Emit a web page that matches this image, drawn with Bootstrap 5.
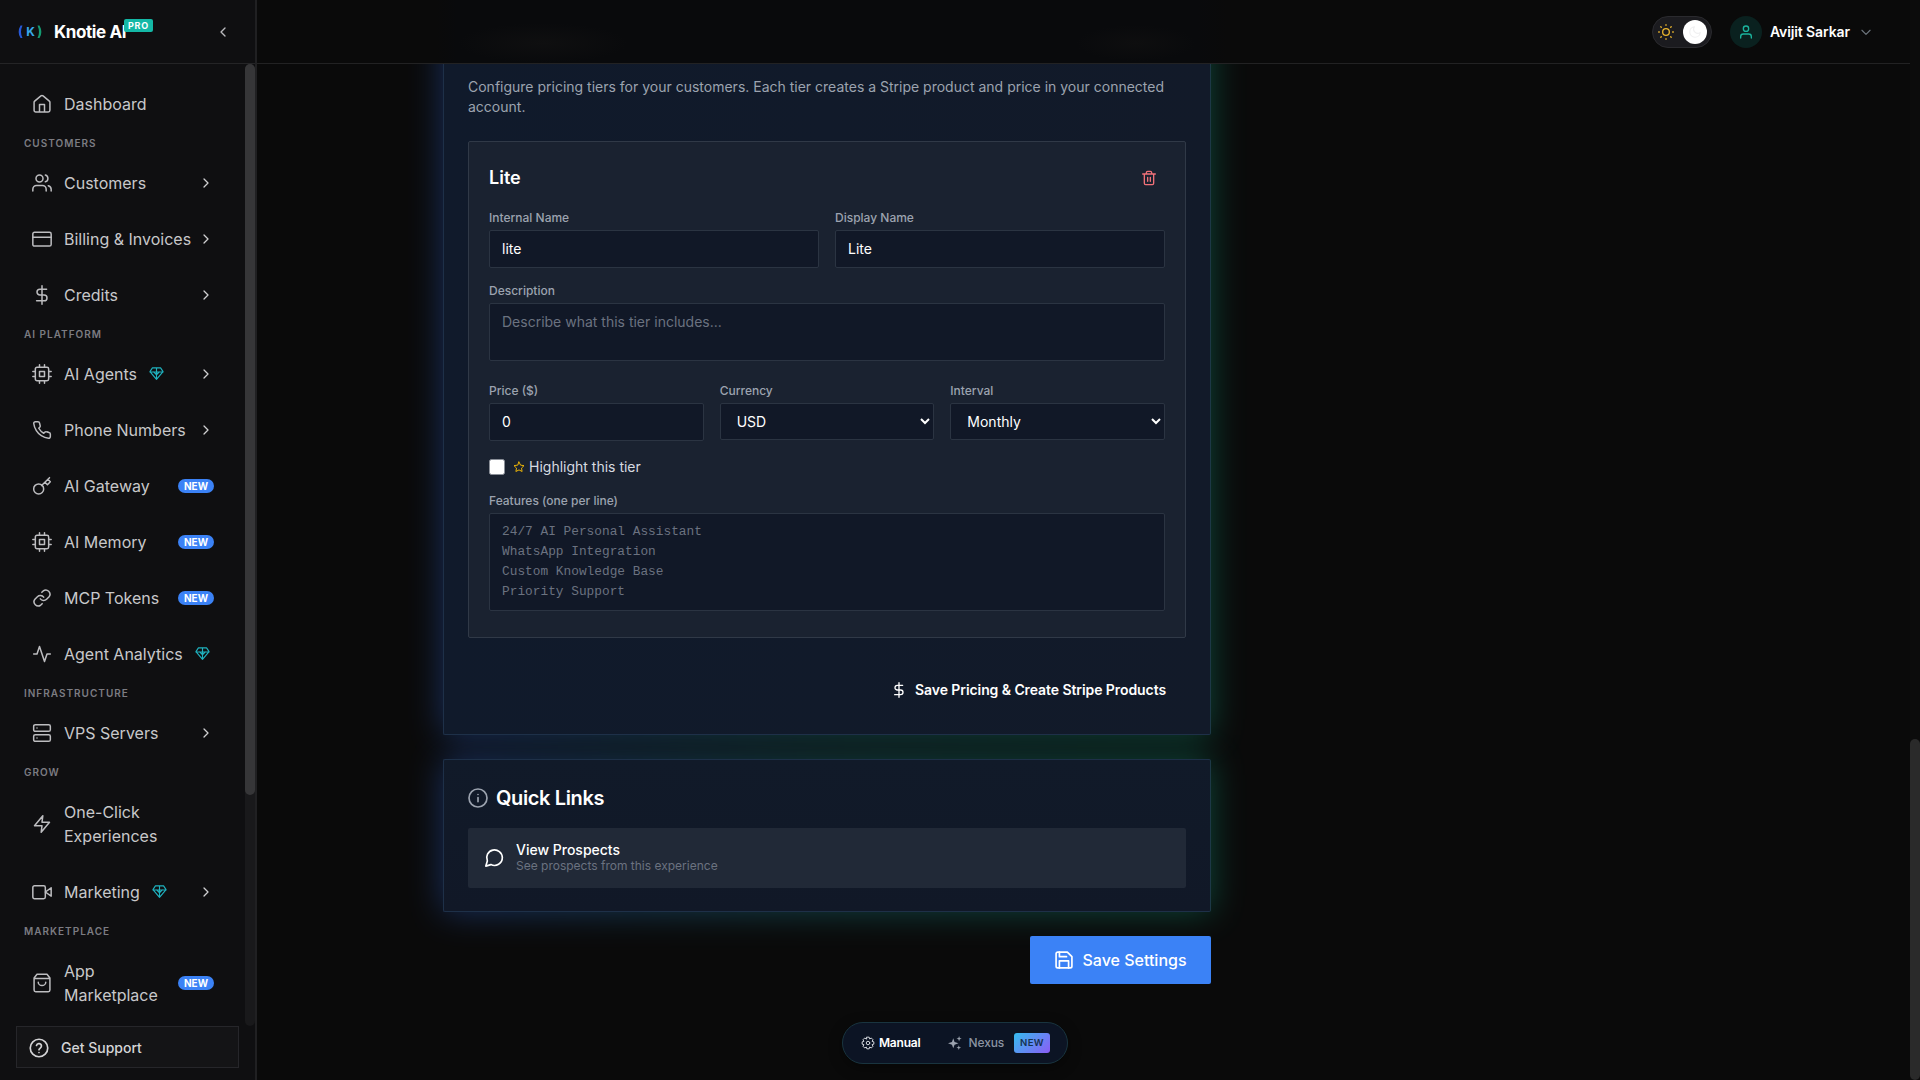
<!DOCTYPE html>
<html lang="en" data-bs-theme="dark">
<head>
<meta charset="utf-8">
<meta name="viewport" content="width=device-width, initial-scale=1">
<title>Knotie AI</title>
<link href="https://cdn.jsdelivr.net/npm/bootstrap@5.3.0/dist/css/bootstrap.min.css" rel="stylesheet">
<style>
body{font-family:Inter,"Liberation Sans",sans-serif;background:#0a0a0a;color:#fff;font-size:14px;line-height:20px;height:100vh;overflow:hidden}
.ico{width:20px;height:20px;flex:none;fill:none;stroke:currentColor;stroke-width:2;stroke-linecap:round;stroke-linejoin:round}
.ico-16{width:16px;height:16px}.ico-14{width:14px;height:14px}.ico-12{width:12px;height:12px}
/* sidebar */
.side{width:257px;background:#0f0f11;border-right:2px solid #202022}
.side-head{height:64px;border-bottom:1px solid #242426;padding:0 24px 0 18px}
.brand-name{font-size:17px;font-weight:700;letter-spacing:-.4px;margin-left:12px;position:relative}
.pro-tag{position:absolute;left:70px;top:-3px;background:#14b8a6;color:#fff;font-size:9px;font-weight:700;line-height:13px;letter-spacing:.7px;padding:0 4px;border-radius:2px}
.side-scroll{min-width:0;padding:11.7px 31px 0 32px}
.side-item{padding:16px 0;font-size:16px;line-height:24px;color:#c8c8ca;gap:12px}
.side-item .ico{color:#bdbdc0;stroke-width:1.8}
.side-item .ico-16{color:#d0d0d2;stroke-width:1.9}
.side-item .gem{width:15px;height:15px;color:#1fb2bf;stroke-width:1.8}
.side-item.snug{gap:12px 6px}
.side-item.snug .ico:first-child{margin-right:6px}
.side-label{font-size:10px;font-weight:600;letter-spacing:1px;line-height:20px;height:23px;padding-top:1.5px;color:#7c7c82;margin-left:-8px}
.new-pill{background:#3b82f6;color:#fff;font-size:10px;font-weight:700;line-height:14px;border-radius:7px;width:36px;text-align:center}
.side-track{width:10px;background:#19191b;border-radius:5px}
.side-thumb{height:731px;background:#363638;border-radius:5px}
.support{height:42px;margin:0 16px 12px;border:1px solid #26262a;background:#141416;color:#d4d4d6;font-weight:500;padding:1px 12px 0;gap:12px}
/* top bar */
.topbar{height:64px;border-bottom:1px solid #222223;padding-right:37px;z-index:3;
 background:radial-gradient(ellipse 85px 20px at 286px 43px,#0f0f10,transparent),radial-gradient(ellipse 60px 18px at 879px 43px,#0e0e0f,transparent),linear-gradient(90deg,#0a0a0a 180px,#090a0c 200px,#090a0c 940px,#0a0a0a 970px)}
.theme-sw{width:60px;height:32px;border-radius:16px;background:#1b1b1f;border:1px solid #2a2a2e;padding:0 4px 0 5px}
.knob{width:24px;height:24px;background:#fff;color:#f0f0f1}
.avatar-dot{width:32px;height:32px;background:#0a211f;color:#1bb39d;margin:0 8px 0 18px}
.user-name{font-weight:600;letter-spacing:-.1px;margin-right:9px}
/* content */
.stage{position:relative;z-index:0;overflow:hidden;padding-left:186px}
.col-main{width:768px}
.glow{position:relative}
.glow::before{content:"";position:absolute;inset:0;z-index:-1;background:linear-gradient(90deg,#2f62d6,#1f8f98 50%,#109c7a);filter:blur(17px);opacity:.42}
.panel{background:linear-gradient(180deg,#111a29,#111827);border:1px solid #1e3048;border-right-color:#1d3846;border-radius:2px;padding:24px}
.panel-main{margin-top:-40px;padding-top:52px;height:710.5px;background:linear-gradient(90deg,#101a2b,#121a29)}
.tier{background:#1a2230;border:1px solid #303947;border-radius:2px;padding:20px;height:497px}
.lbl{display:block;font-size:12px;font-weight:500;line-height:16px;color:#9ca3af;margin-bottom:4px}
.tier .form-control,.tier .form-select{background:#111827;border:1px solid #2b3442;border-radius:2px;color:#fff;font-size:14px;line-height:20px;padding:8px 12px;resize:none;overflow:hidden}
.tier .form-select{appearance:auto;height:37px;padding:0 0 0 12px}
.tier .form-control::placeholder{color:#6b7280;opacity:1}
.tier .mono{font-family:"Liberation Mono",monospace;font-size:12.82px}
.three{display:grid;grid-template-columns:repeat(3,1fr);gap:16px}
.hl-box{width:16px;height:16px;background:#fff;border:1px solid #8a8f98;border-radius:2.5px}
.quick{background:#212937;border-radius:2px;height:60px;padding:0 16px;gap:12px}
.save-btn{background:#3b82f6;color:#fff;height:48px;width:181px;border-radius:2px;font-size:16px;font-weight:500;gap:8px}
.mode-pill{position:absolute;left:585px;top:958px;width:226px;height:42px;border-radius:21px;background:#0c1424;border:1px solid #19343f;font-size:12px;letter-spacing:-.1px;box-shadow:0 4px 14px #0006;padding:0 17px 0 18px}
.new-grad{background:linear-gradient(135deg,#35bdf0,#8b5cf6);color:#173252;font-size:9.6px;font-weight:600;letter-spacing:.4px;width:36px;height:20px;line-height:19px;border-radius:3px;text-align:center}
.page-track{width:10px;background:#0c0c0c;padding-top:739px}
.page-thumb{height:341px;background:#2a2a2a;border-radius:5px}
</style>
<script src="https://cdn.jsdelivr.net/npm/bootstrap@5.3.0/dist/js/bootstrap.bundle.min.js"></script>
</head>
<body class="d-flex">
<svg class="d-none" xmlns="http://www.w3.org/2000/svg">
<symbol id="home" viewBox="0 0 24 24"><path d="M2.500 10a2 2 0 0 1 .7-1.500l7.500-6.200a2 2 0 0 1 2.600 0l7.500 6.200a2 2 0 0 1 .7 1.500v9.500a2 2 0 0 1-2 2h-15a2 2 0 0 1-2-2zM9 21.500v-9h6v9"/></symbol>
<symbol id="users" viewBox="0 0 24 24"><circle cx="9" cy="6.500" r="4.200"/><path d="M1 21.500v-2a4.500 4.500 0 0 1 4.500-4.500h7a4.500 4.500 0 0 1 4.500 4.500v2M16 2.500a4.200 4.200 0 0 1 0 8.100M19.500 15.200a4.500 4.500 0 0 1 3.500 4.300v2"/></symbol>
<symbol id="credit" viewBox="0 0 24 24"><rect x="1" y="4" width="22" height="16.500" rx="2"/><path d="M1 9.800h22"/></symbol>
<symbol id="dollar" viewBox="0 0 24 24"><path d="M12 1v22M17.500 5H9.500a3.500 3.500 0 0 0 0 7h5a3.500 3.500 0 0 1 0 7H5.500"/></symbol>
<symbol id="cpu" viewBox="0 0 24 24"><rect x="4" y="4" width="16" height="16" rx="2"/><path d="M9 9h6v6H9zM9 1v3M15 1v3M9 20v3M15 20v3M20 9h3M20 15h3M1 9h3M1 15h3"/></symbol>
<symbol id="phone" viewBox="0 0 24 24"><path d="M22 16.900v3a2 2 0 0 1-2.200 2 19.800 19.800 0 0 1-8.600-3.100 19.500 19.500 0 0 1-6-6A19.800 19.800 0 0 1 2.100 4.200 2 2 0 0 1 4.100 2h3a2 2 0 0 1 2 1.700c.1 1 .4 1.900.7 2.800a2 2 0 0 1-.5 2.100L8.100 9.900a16 16 0 0 0 6 6l1.300-1.300a2 2 0 0 1 2.100-.4c.9.300 1.800.6 2.800.7a2 2 0 0 1 1.700 2z"/></symbol>
<symbol id="key" viewBox="0 0 24 24"><path d="M21 2l-9.500 9.500M19 4l3 3-3.500 3.500-3-3"/><circle cx="8" cy="15.500" r="6"/></symbol>
<symbol id="link" viewBox="0 0 24 24"><path d="M10 13a5 5 0 0 0 7.500.5l3-3a5 5 0 0 0-7-7l-1.700 1.700M14 11a5 5 0 0 0-7.500-.5l-3 3a5 5 0 0 0 7 7l1.700-1.700"/></symbol>
<symbol id="pulse" viewBox="0 0 24 24"><path d="M22 12h-4l-3 9L9 3l-3 9H2"/></symbol>
<symbol id="server" viewBox="0 0 24 24"><rect x="2" y="2" width="20" height="8" rx="2"/><rect x="2" y="14" width="20" height="8" rx="2"/><path d="M6 6h.01M6 18h.01"/></symbol>
<symbol id="zap" viewBox="0 0 24 24"><path d="M13 2L3 14h9l-1 8 10-12h-9z"/></symbol>
<symbol id="video" viewBox="0 0 24 24"><path d="M23 7l-7 5 7 5z"/><rect x="1" y="4.500" width="15" height="15.500" rx="2"/></symbol>
<symbol id="bag" viewBox="0 0 24 24"><path d="M6 1.500L2.500 6v14.500a2 2 0 0 0 2 2h15a2 2 0 0 0 2-2V6L18 1.500zM2.500 6.500h19M16.500 11a4.500 4 0 0 1-9 0"/></symbol>
<symbol id="help" viewBox="0 0 24 24"><circle cx="12" cy="12" r="10.500"/><path d="M9 9a3 3 0 0 1 5.900 1c0 2-2.900 2.600-2.900 4M12 17.500h.01"/></symbol>
<symbol id="gem" viewBox="0 0 24 24"><path d="M5.500 3h13l4 6L12 21.500 1.500 9zM1.500 9.500h21M12 3v18M7.500 9.500l4.500 4.500 4.500-4.500"/></symbol>
<symbol id="right" viewBox="0 0 24 24"><path d="M9 18l6-6-6-6"/></symbol>
<symbol id="left" viewBox="0 0 24 24"><path d="M15 18l-6-6 6-6"/></symbol>
<symbol id="down" viewBox="0 0 24 24"><path d="M5 9l7 7 7-7"/></symbol>
<symbol id="sun" viewBox="0 0 24 24"><circle cx="12" cy="12" r="5"/><path d="M12 1v1M12 22v1M4.200 4.200l.7.700M19.100 19.100l.7.700M1 12h1M22 12h1M4.200 19.800l.7-.7M19.100 4.900l.7-.7"/></symbol>
<symbol id="moon" viewBox="0 0 24 24"><path d="M21 12.800A9 9 0 1 1 11.200 3 7 7 0 0 0 21 12.800z"/></symbol>
<symbol id="user" viewBox="0 0 24 24"><path d="M20 21v-2a4 4 0 0 0-4-4H8a4 4 0 0 0-4 4v2"/><circle cx="12" cy="7" r="4"/></symbol>
<symbol id="trash" viewBox="0 0 24 24"><path d="M2.500 6h19M19 6v14a2 2 0 0 1-2 2H7a2 2 0 0 1-2-2V6M8 6V4a2 2 0 0 1 2-2h4a2 2 0 0 1 2 2v2M10 11v6M14 11v6"/></symbol>
<symbol id="star" viewBox="0 0 24 24"><path d="M12 2l3.100 6.300 6.900 1-5 4.900 1.200 6.800-6.200-3.200L5.800 21 7 14.200 2 9.300l6.900-1z"/></symbol>
<symbol id="info" viewBox="0 0 24 24"><circle cx="12" cy="12" r="10.800"/><path d="M12 16.500v-5M12 7.800h.01"/></symbol>
<symbol id="chat" viewBox="0 0 24 24"><path d="M22 11.500a9.400 9.400 0 0 1-13.700 8.400L2.200 21.700l1.800-6.200A9.400 9.400 0 1 1 22 11.500z"/></symbol>
<symbol id="save" viewBox="0 0 24 24"><path d="M19.500 21.500h-15a2 2 0 0 1-2-2v-15a2 2 0 0 1 2-2H16l5.500 5.500v11.500a2 2 0 0 1-2 2z"/><path d="M17.500 21.500V13h-11v8.500M6.500 2.500V8H15"/></symbol>
<symbol id="gear" viewBox="0 0 24 24"><path d="M10 2h4l.8 3 2.900-1.500 2.800 2.800L19 9.200l3 .8v4l-3 .8 1.500 2.900-2.800 2.800-2.900-1.500-.8 3h-4l-.8-3-2.900 1.500-2.800-2.800L5 14.800 2 14v-4l3-.8-1.500-2.900 2.800-2.800L9.200 5z"/><circle cx="12" cy="12" r="3"/></symbol>
<symbol id="sparkles" viewBox="0 0 24 24"><path fill="currentColor" stroke="none" d="M9 4l2.200 6.300L18 12.500l-6.800 2.300L9 21l-2.200-6.200L0 12.500l6.800-2.200zM19 0l1.200 3.300L23.500 4.500l-3.300 1.200L19 9l-1.200-3.300L14.500 4.500l3.300-1.200zM18.500 16l1 3 3 1-3 1-1 3-1-3-3-1 3-1z"/></symbol>
</svg>

<aside class="side d-flex flex-column flex-shrink-0">
 <div class="side-head d-flex align-items-center">
  <svg width="24" height="14" viewBox="0 0 24 14"><path d="M4.500.5H2.500Q-1.200 7 2.500 13h2Q1.500 7 4.500.5z" fill="#2759d8"/><path d="M19.500.5h2Q25.200 7 21.500 13h-2Q22.500 7 19.500.5z" fill="#149b72"/><text x="8.200" y="10.500" font-size="12" font-weight="700" fill="#38a8e8" font-family="Inter">K</text></svg>
  <div class="brand-name">Knotie AI<span class="pro-tag">PRO</span></div>
  <svg class="ico ico-16 ms-auto" style="color:#bbbbbe"><use href="#left"/></svg>
 </div>
 <div class="d-flex flex-grow-1 overflow-hidden">
  <nav class="side-scroll flex-grow-1">
   <div class="side-item d-flex align-items-center"><svg class="ico"><use href="#home"/></svg>Dashboard</div>
   <div class="side-label">CUSTOMERS</div>
   <div class="side-item d-flex align-items-center"><svg class="ico"><use href="#users"/></svg>Customers<svg class="ico ico-16 ms-auto"><use href="#right"/></svg></div>
   <div class="side-item snug d-flex align-items-center text-nowrap"><svg class="ico"><use href="#credit"/></svg>Billing &amp; Invoices<svg class="ico ico-16 ms-auto"><use href="#right"/></svg></div>
   <div class="side-item d-flex align-items-center"><svg class="ico"><use href="#dollar"/></svg>Credits<svg class="ico ico-16 ms-auto"><use href="#right"/></svg></div>
   <div class="side-label">AI PLATFORM</div>
   <div class="side-item d-flex align-items-center"><svg class="ico"><use href="#cpu"/></svg>AI Agents<svg class="ico gem"><use href="#gem"/></svg><svg class="ico ico-16 ms-auto"><use href="#right"/></svg></div>
   <div class="side-item snug d-flex align-items-center text-nowrap"><svg class="ico"><use href="#phone"/></svg>Phone Numbers<svg class="ico ico-16 ms-auto"><use href="#right"/></svg></div>
   <div class="side-item d-flex align-items-center"><svg class="ico"><use href="#key"/></svg>AI Gateway<span class="new-pill ms-auto">NEW</span></div>
   <div class="side-item d-flex align-items-center"><svg class="ico"><use href="#cpu"/></svg>AI Memory<span class="new-pill ms-auto">NEW</span></div>
   <div class="side-item d-flex align-items-center"><svg class="ico"><use href="#link"/></svg>MCP Tokens<span class="new-pill ms-auto">NEW</span></div>
   <div class="side-item d-flex align-items-center text-nowrap"><svg class="ico"><use href="#pulse"/></svg>Agent Analytics<svg class="ico gem"><use href="#gem"/></svg></div>
   <div class="side-label">INFRASTRUCTURE</div>
   <div class="side-item d-flex align-items-center"><svg class="ico"><use href="#server"/></svg>VPS Servers<svg class="ico ico-16 ms-auto"><use href="#right"/></svg></div>
   <div class="side-label">GROW</div>
   <div class="side-item d-flex align-items-center"><svg class="ico"><use href="#zap"/></svg><span>One-Click<br>Experiences</span></div>
   <div class="side-item d-flex align-items-center"><svg class="ico"><use href="#video"/></svg>Marketing<svg class="ico gem"><use href="#gem"/></svg><svg class="ico ico-16 ms-auto"><use href="#right"/></svg></div>
   <div class="side-label">MARKETPLACE</div>
   <div class="side-item d-flex align-items-center"><svg class="ico"><use href="#bag"/></svg><span>App<br>Marketplace</span><span class="new-pill ms-auto">NEW</span></div>
  </nav>
  <div class="side-track flex-shrink-0"><div class="side-thumb"></div></div>
 </div>
 <div class="support d-flex align-items-center flex-shrink-0"><svg class="ico"><use href="#help"/></svg>Get Support</div>
</aside>

<div class="d-flex flex-column flex-grow-1">
 <header class="topbar d-flex align-items-center justify-content-end flex-shrink-0">
  <div class="theme-sw d-flex align-items-center justify-content-between"><svg class="ico ico-16" style="color:#eab52d"><use href="#sun"/></svg><span class="knob rounded-circle d-flex align-items-center justify-content-center"><svg class="ico ico-14"><use href="#moon"/></svg></span></div>
  <div class="avatar-dot rounded-circle d-flex align-items-center justify-content-center"><svg class="ico ico-16"><use href="#user"/></svg></div>
  <span class="user-name">Avijit Sarkar</span>
  <svg class="ico ico-14 text-secondary"><use href="#down"/></svg>
 </header>
 <main class="stage flex-grow-1">
  <div class="col-main">
   <section class="glow mb-4">
    <div class="panel panel-main">
     <p class="mb-4" style="color:#9ca3af">Configure pricing tiers for your customers. Each tier creates a Stripe product and price in your connected account.</p>
     <div class="tier">
      <div class="d-flex justify-content-between align-items-center pe-2" style="height:32px"><span class="fw-semibold" style="font-size:18px">Lite</span><svg class="ico ico-16" style="color:#f07178"><use href="#trash"/></svg></div>
      <div class="d-flex gap-3 mt-3">
       <div class="flex-fill"><label class="lbl">Internal Name</label><input class="form-control" value="lite"></div>
       <div class="flex-fill"><label class="lbl">Display Name</label><input class="form-control" value="Lite"></div>
      </div>
      <div style="margin-top:15px"><label class="lbl">Description</label><textarea class="form-control" style="height:58px" placeholder="Describe what this tier includes..."></textarea></div>
      <div class="three" style="margin-top:22px">
       <div><label class="lbl">Price ($)</label><input class="form-control" value="0"></div>
       <div><label class="lbl">Currency</label><select class="form-select"><option>USD</option></select></div>
       <div><label class="lbl">Interval</label><select class="form-select"><option>Monthly</option></select></div>
      </div>
      <div class="d-flex align-items-center" style="color:#d7dbe0;margin-top:15.500px"><span class="hl-box me-2"></span><svg class="ico ico-12 me-1" style="color:#eab308"><use href="#star"/></svg>Highlight this tier</div>
      <div class="mt-3"><label class="lbl">Features (one per line)</label><textarea class="form-control mono" style="height:98px" placeholder="24/7 AI Personal Assistant
WhatsApp Integration
Custom Knowledge Base
Priority Support"></textarea></div>
     </div>
     <div class="d-flex align-items-center justify-content-end" style="padding:42px 20px 0;gap:8px"><svg class="ico ico-16"><use href="#dollar"/></svg><span style="font-weight:600;letter-spacing:-.08px">Save Pricing &amp; Create Stripe Products</span></div>
    </div>
   </section>
   <section class="glow mb-4">
    <div class="panel" style="height:153.500px">
     <div class="d-flex align-items-center gap-2 fw-semibold" style="font-size:20px;line-height:28px;margin-bottom:16px;letter-spacing:-.38px"><svg class="ico" style="color:#9ca3af"><use href="#info"/></svg>Quick Links</div>
     <div class="quick d-flex align-items-center"><svg class="ico"><use href="#chat"/></svg><div><div style="font-weight:500;line-height:17px">View Prospects</div><div style="font-size:12px;line-height:16px;color:#6b7280">See prospects from this experience</div></div></div>
    </div>
   </section>
   <div class="d-flex justify-content-end"><button class="save-btn border-0 d-flex align-items-center justify-content-center"><svg class="ico"><use href="#save"/></svg>Save Settings</button></div>
  </div>
  <div class="mode-pill d-flex align-items-center">
   <svg class="ico ico-14" style="color:#d5d8de;stroke-width:1.7"><use href="#gear"/></svg><span class="fw-semibold" style="margin-left:4px;letter-spacing:-.2px">Manual</span>
   <svg class="ico ico-14" style="margin-left:28px;color:#9ca3af"><use href="#sparkles"/></svg><span style="margin-left:6px;color:#8b93a2;font-weight:500">Nexus</span>
   <span class="new-grad ms-auto">NEW</span>
  </div>
 </main>
</div>
<div class="page-track flex-shrink-0"><div class="page-thumb"></div></div>
</body>
</html>
